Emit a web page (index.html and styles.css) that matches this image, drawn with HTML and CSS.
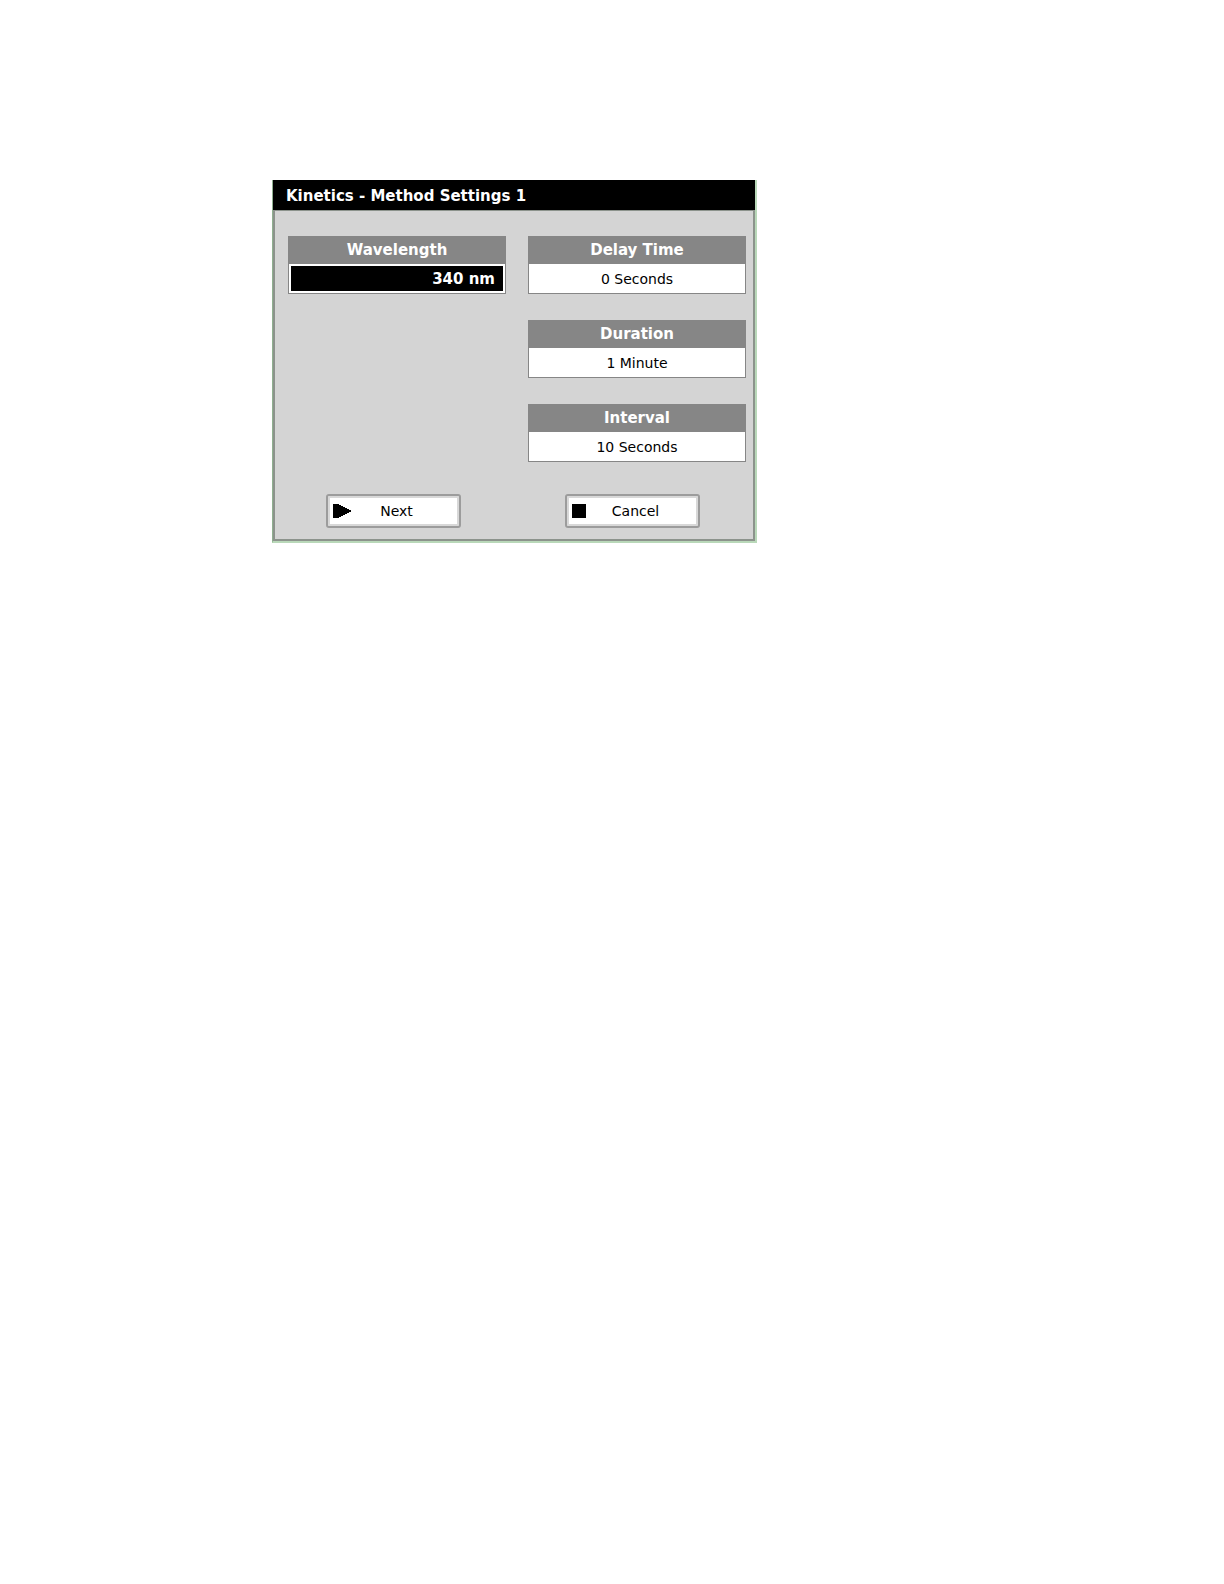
FILE: index.html
```html
<!DOCTYPE html>
<html lang="en">
<head>
<meta charset="utf-8">
<meta name="viewport" content="width=device-width, initial-scale=1">
<title>Kinetics - Method Settings 1</title>
<link rel="stylesheet" href="styles.css">
</head>
<body>
<main class="page">
  <form class="dialog">
    <h1 class="title">Kinetics - Method Settings 1</h1>
    <div class="content">
      <div class="settings">
        <div class="column">
          <div class="field">
            <label class="field-label" for="wavelength">Wavelength</label>
            <input class="field-value selected" id="wavelength" type="text" value="340 nm">
          </div>
        </div>
        <div class="column">
          <div class="field">
            <label class="field-label" for="delay">Delay Time</label>
            <input class="field-value" id="delay" type="text" value="0 Seconds">
          </div>
          <div class="field">
            <label class="field-label" for="duration">Duration</label>
            <input class="field-value" id="duration" type="text" value="1 Minute">
          </div>
          <div class="field">
            <label class="field-label" for="interval">Interval</label>
            <input class="field-value" id="interval" type="text" value="10 Seconds">
          </div>
        </div>
      </div>
      <div class="actions">
        <button class="button" type="button">
          <svg class="icon" viewBox="0 0 18 14" aria-hidden="true"><path d="M0 0H6V1H8V2H10V3H12V4H14V5H16V6H18V8H16V9H14V10H12V11H10V12H8V13H6V14H0Z"/></svg>
          <span class="caption">Next</span>
        </button>
        <button class="button" type="button">
          <svg class="icon" viewBox="0 0 18 14" aria-hidden="true"><path d="M0 0H14V14H0Z"/></svg>
          <span class="caption">Cancel</span>
        </button>
      </div>
    </div>
  </form>
</main>
</body>
</html>
```
FILE: styles.css
```css
* {
  box-sizing: border-box;
}

body {
  margin: 0;
  background: #fff;
  color: #000;
  font: 14px/20px "DejaVu Sans", sans-serif;
}

.page {
  padding: 180px 24px 24px 272px;
}

.dialog {
  max-width: 485px;
  border: solid;
  border-width: 0 2px 2px 1px;
  border-color: #b9d8b9 #b9d8b9 #b9d8b9 #8fb08f;
  background: #d4d4d4;
}

.title {
  margin: 0;
  padding: 6px 13px 4px;
  background: #000;
  color: #fff;
  font-size: 15px;
  line-height: 20px;
}

.content {
  padding: 25px 7px 11px 13px;
  border: 2px solid #8c938c;
  border-top-width: 1px;
}

.settings {
  display: grid;
  grid-template-columns: 1fr 1fr;
  gap: 22px;
}

.column {
  display: flex;
  flex-direction: column;
  gap: 26px;
}

.field {
  display: flex;
  flex-direction: column;
  border: 1px solid #868686;
}

.field-label {
  padding: 3px 0 4px;
  background: #868686;
  color: #fff;
  font-size: 15px;
  font-weight: bold;
  text-align: center;
}

.field-value {
  width: 100%;
  height: 29px;
  margin: 0;
  padding: 1px 8px 0;
  border: 0;
  border-radius: 0;
  outline: 0;
  background: #fff;
  color: #000;
  font: inherit;
  text-align: center;
}

.selected {
  border: 2px solid #fff;
  background: #000;
  color: #fff;
  font-size: 15px;
  font-weight: bold;
  text-align: right;
}

.actions {
  display: flex;
  justify-content: center;
  gap: 104px;
  margin-top: 32px;
  padding-right: 8px;
}

.button {
  display: flex;
  align-items: center;
  width: 135px;
  height: 34px;
  margin: 0;
  padding: 0 5px;
  border: 2px solid #9c9c9c;
  border-radius: 3px;
  background: #fff;
  box-shadow: inset 0 0 0 2px #d8d8d8;
  color: #000;
  font: inherit;
}

.icon {
  width: 18px;
  height: 14px;
  flex: none;
}

.caption {
  flex: 1;
  padding-right: 12px;
  text-align: center;
}
```
